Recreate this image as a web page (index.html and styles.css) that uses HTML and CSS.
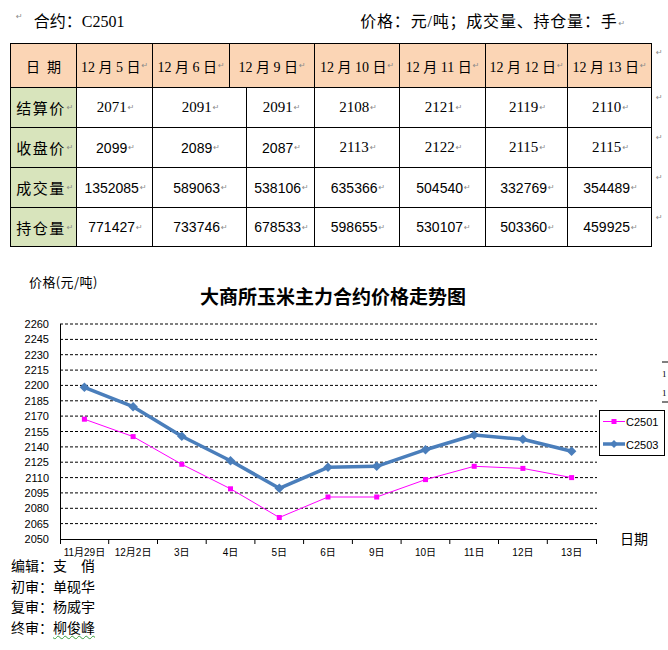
FILE: index.html
```html
<!DOCTYPE html>
<html lang="zh-CN">
<head>
<meta charset="utf-8">
<title>大商所玉米主力合约</title>
<link rel="stylesheet" href="styles.css">
</head>
<body>
<div class="topbar">
  <span class="ret ret-lead">↵</span>
  <span class="contract">合约：C2501</span>
  <span class="units">价格：元/吨；成交量、持仓量：手<span class="ret">↵</span></span>
</div>

<div class="tbl">
  <div class="row head">
    <div class="cell first"><span class="lbl-date">日期</span></div>
    <div class="cell">12 月 5 日<span class="ret">↵</span></div>
    <div class="cell">12 月 6 日<span class="ret">↵</span></div>
    <div class="cell">12 月 9 日<span class="ret">↵</span></div>
    <div class="cell">12 月 10 日<span class="ret">↵</span></div>
    <div class="cell">12 月 11 日<span class="ret">↵</span></div>
    <div class="cell">12 月 12 日<span class="ret">↵</span></div>
    <div class="cell">12 月 13 日<span class="ret">↵</span></div>
    <div class="mark">↵</div>
  </div>
  <div class="row body r1">
    <div class="cell first lbl">结算价<span class="ret">↵</span></div>
    <div class="cell num serif">2071<span class="ret">↵</span></div>
    <div class="cell num serif">2091<span class="ret">↵</span></div>
    <div class="cell num serif">2091<span class="ret">↵</span></div>
    <div class="cell num serif">2108<span class="ret">↵</span></div>
    <div class="cell num serif">2121<span class="ret">↵</span></div>
    <div class="cell num serif">2119<span class="ret">↵</span></div>
    <div class="cell num serif">2110<span class="ret">↵</span></div>
    <div class="mark">↵</div>
  </div>
  <div class="row body r2">
    <div class="cell first lbl">收盘价<span class="ret">↵</span></div>
    <div class="cell num">2099<span class="ret">↵</span></div>
    <div class="cell num">2089<span class="ret">↵</span></div>
    <div class="cell num">2087<span class="ret">↵</span></div>
    <div class="cell num serif">2113<span class="ret">↵</span></div>
    <div class="cell num serif">2122<span class="ret">↵</span></div>
    <div class="cell num serif">2115<span class="ret">↵</span></div>
    <div class="cell num serif">2115<span class="ret">↵</span></div>
    <div class="mark">↵</div>
  </div>
  <div class="row body r3">
    <div class="cell first lbl">成交量<span class="ret">↵</span></div>
    <div class="cell num">1352085<span class="ret">↵</span></div>
    <div class="cell num">589063<span class="ret">↵</span></div>
    <div class="cell num">538106<span class="ret">↵</span></div>
    <div class="cell num">635366<span class="ret">↵</span></div>
    <div class="cell num">504540<span class="ret">↵</span></div>
    <div class="cell num">332769<span class="ret">↵</span></div>
    <div class="cell num">354489<span class="ret">↵</span></div>
    <div class="mark">↵</div>
  </div>
  <div class="row body r4">
    <div class="cell first lbl">持仓量<span class="ret">↵</span></div>
    <div class="cell num">771427<span class="ret">↵</span></div>
    <div class="cell num">733746<span class="ret">↵</span></div>
    <div class="cell num">678533<span class="ret">↵</span></div>
    <div class="cell num">598655<span class="ret">↵</span></div>
    <div class="cell num">530107<span class="ret">↵</span></div>
    <div class="cell num">503360<span class="ret">↵</span></div>
    <div class="cell num">459925<span class="ret">↵</span></div>
    <div class="mark">↵</div>
  </div>
</div>

<svg class="chart" width="668" height="305" viewBox="0 250 668 305" xmlns="http://www.w3.org/2000/svg">
  <text class="ytitle" x="29" y="281">价格(元/吨)</text>
  <text class="ctitle" x="333" y="295">大商所玉米主力合约价格走势图</text>

  <g class="grid">
    <line x1="60" y1="324" x2="597" y2="324"/>
    <line x1="60" y1="339.4" x2="597" y2="339.4"/>
    <line x1="60" y1="354.7" x2="597" y2="354.7"/>
    <line x1="60" y1="370.1" x2="597" y2="370.1"/>
    <line x1="60" y1="385.4" x2="597" y2="385.4"/>
    <line x1="60" y1="400.8" x2="597" y2="400.8"/>
    <line x1="60" y1="416.1" x2="597" y2="416.1"/>
    <line x1="60" y1="431.5" x2="597" y2="431.5"/>
    <line x1="60" y1="446.9" x2="597" y2="446.9"/>
    <line x1="60" y1="462.2" x2="597" y2="462.2"/>
    <line x1="60" y1="477.6" x2="597" y2="477.6"/>
    <line x1="60" y1="492.9" x2="597" y2="492.9"/>
    <line x1="60" y1="508.3" x2="597" y2="508.3"/>
    <line x1="60" y1="523.6" x2="597" y2="523.6"/>
  </g>

  <g class="ylab">
    <text x="49" y="324">2260</text>
    <text x="49" y="339.4">2245</text>
    <text x="49" y="354.7">2230</text>
    <text x="49" y="370.1">2215</text>
    <text x="49" y="385.4">2200</text>
    <text x="49" y="400.8">2185</text>
    <text x="49" y="416.1">2170</text>
    <text x="49" y="431.5">2155</text>
    <text x="49" y="446.9">2140</text>
    <text x="49" y="462.2">2125</text>
    <text x="49" y="477.6">2110</text>
    <text x="49" y="492.9">2095</text>
    <text x="49" y="508.3">2080</text>
    <text x="49" y="523.6">2065</text>
    <text x="49" y="539">2050</text>
  </g>

  <g class="axis">
    <line x1="60.5" y1="324" x2="60.5" y2="539.5"/>
    <line x1="60" y1="539.5" x2="597" y2="539.5"/>
    <line x1="60.5" y1="539" x2="60.5" y2="544"/>
    <line x1="108.7" y1="539" x2="108.7" y2="544"/>
    <line x1="157.5" y1="539" x2="157.5" y2="544"/>
    <line x1="206.2" y1="539" x2="206.2" y2="544"/>
    <line x1="254.9" y1="539" x2="254.9" y2="544"/>
    <line x1="303.6" y1="539" x2="303.6" y2="544"/>
    <line x1="352.4" y1="539" x2="352.4" y2="544"/>
    <line x1="401.1" y1="539" x2="401.1" y2="544"/>
    <line x1="449.8" y1="539" x2="449.8" y2="544"/>
    <line x1="498.5" y1="539" x2="498.5" y2="544"/>
    <line x1="547.3" y1="539" x2="547.3" y2="544"/>
    <line x1="596.5" y1="539" x2="596.5" y2="544"/>
  </g>

  <g class="xlab">
    <text x="84.4" y="552">11月29日</text>
    <text x="133.1" y="552">12月2日</text>
    <text x="181.8" y="552">3日</text>
    <text x="230.5" y="552">4日</text>
    <text x="279.3" y="552">5日</text>
    <text x="328" y="552">6日</text>
    <text x="376.7" y="552">9日</text>
    <text x="425.5" y="552">10日</text>
    <text x="474.2" y="552">11日</text>
    <text x="522.9" y="552">12日</text>
    <text x="571.6" y="552">13日</text>
  </g>
  <text class="xtitle" x="620" y="538">日期</text>

  <polyline class="s1" points="84.4,419.2 133.1,436.6 181.8,464.3 230.5,488.8 279.3,517.5 328,497 376.7,497 425.5,479.6 474.2,466.3 522.9,468.4 571.6,477.6"/>
  <g class="m1">
    <rect x="81.9" y="416.7" width="5" height="5"/>
    <rect x="130.6" y="434.1" width="5" height="5"/>
    <rect x="179.3" y="461.8" width="5" height="5"/>
    <rect x="228" y="486.3" width="5" height="5"/>
    <rect x="276.8" y="515" width="5" height="5"/>
    <rect x="325.5" y="494.5" width="5" height="5"/>
    <rect x="374.2" y="494.5" width="5" height="5"/>
    <rect x="423" y="477.1" width="5" height="5"/>
    <rect x="471.7" y="463.8" width="5" height="5"/>
    <rect x="520.4" y="465.9" width="5" height="5"/>
    <rect x="569.1" y="475.1" width="5" height="5"/>
  </g>

  <polyline class="s2" points="84.4,387.3 133.1,406.7 181.8,436.3 230.5,460.7 279.3,488.3 328,467.3 376.7,466.3 425.5,449.7 474.2,435 522.9,439.3 571.6,451.3"/>
  <g class="m2">
    <path d="M84.4 382.5 L89.2 387.3 L84.4 392.1 L79.6 387.3 Z"/>
    <path d="M133.1 401.9 L137.9 406.7 L133.1 411.5 L128.3 406.7 Z"/>
    <path d="M181.8 431.5 L186.6 436.3 L181.8 441.1 L177 436.3 Z"/>
    <path d="M230.5 455.9 L235.3 460.7 L230.5 465.5 L225.7 460.7 Z"/>
    <path d="M279.3 483.5 L284.1 488.3 L279.3 493.1 L274.5 488.3 Z"/>
    <path d="M328 462.5 L332.8 467.3 L328 472.1 L323.2 467.3 Z"/>
    <path d="M376.7 461.5 L381.5 466.3 L376.7 471.1 L371.9 466.3 Z"/>
    <path d="M425.5 444.9 L430.3 449.7 L425.5 454.5 L420.7 449.7 Z"/>
    <path d="M474.2 430.2 L479 435 L474.2 439.8 L469.4 435 Z"/>
    <path d="M522.9 434.5 L527.7 439.3 L522.9 444.1 L518.1 439.3 Z"/>
    <path d="M571.6 446.5 L576.4 451.3 L571.6 456.1 L566.8 451.3 Z"/>
  </g>

  <rect class="legend" x="599.5" y="410.5" width="65" height="45"/>
  <line class="s1" x1="603" y1="421.5" x2="625" y2="421.5"/>
  <rect class="m1" x="611.5" y="419" width="5" height="5"/>
  <text class="legtext" x="626" y="422">C2501</text>
  <line class="s2" x1="603" y1="444" x2="625" y2="444"/>
  <path class="m2" d="M614 440 L618 444 L614 448 L610 444 Z"/>
  <text class="legtext" x="626" y="444.5">C2503</text>

  <g class="stray">
    <line x1="662" y1="362" x2="668" y2="362"/>
    <line x1="662" y1="402" x2="668" y2="402"/>
  </g>
  <text class="straytext" x="662" y="374">1</text>
  <text class="straytext" x="662" y="393">1</text>
</svg>

<div class="footer">
  <div class="fline">编辑：支　俏</div>
  <div class="fline">初审：单砚华</div>
  <div class="fline">复审：杨威宇</div>
  <div class="fline">终审：<span class="wavy">柳俊峰</span></div>
</div>
</body>
</html>
```

FILE: styles.css
```css
* { box-sizing: border-box; }

body {
  margin: 0;
  background: #ffffff;
  color: #000000;
  font-family: "Liberation Serif", "Noto Sans CJK SC", serif;
  width: 668px;
  height: 650px;
  overflow: hidden;
}

.ret {
  font-family: "DejaVu Sans", sans-serif;
  font-size: 8px;
  color: #8a8a8a;
  margin-left: 1px;
  vertical-align: 1px;
}

.topbar {
  height: 43px;
  display: flex;
  align-items: center;
  padding-left: 15px;
  padding-bottom: 4px;
  font-size: 16px;
}

.ret-lead {
  margin-right: 11px;
  vertical-align: 4px;
  align-self: flex-start;
  margin-top: 12px;
}

.units {
  margin-left: auto;
  margin-right: 42px;
  letter-spacing: 0.8px;
}

.tbl {
  margin-left: 10px;
}

.row {
  display: grid;
  grid-template-columns: 67px 76px 94px 68px 85px 86px 82px 84px 16px;
}

.row.head {
  grid-template-columns: 67px 76px 77px 85px 85px 86px 82px 84px 16px;
  height: 45px;
}

.row.r1, .row.r2, .row.r3 { height: 40px; }
.row.r4 { height: 39px; }

.cell {
  border-right: 1px solid #000;
  border-bottom: 1px solid #000;
  display: flex;
  align-items: center;
  justify-content: center;
  white-space: nowrap;
  background: #ffffff;
}

.head .cell {
  border-top: 1px solid #000;
  background: #fbd5b5;
  font-size: 14px;
}

.cell.first {
  border-left: 1px solid #000;
}

.body .cell.first {
  background: #d8e4bc;
}

.lbl-date {
  font-family: "Noto Sans CJK SC", sans-serif;
  font-size: 14px;
  letter-spacing: 7px;
  margin-right: -7px;
}

.lbl {
  font-family: "Noto Sans CJK SC", sans-serif;
  font-size: 15px;
  letter-spacing: 1.5px;
  justify-content: flex-end;
  padding-right: 1px;
}

.num {
  font-family: "Liberation Sans", sans-serif;
  font-size: 14px;
  padding-left: 2px;
}

.num.serif {
  font-family: "Liberation Serif", serif;
  font-size: 15px;
}

.mark {
  font-family: "DejaVu Sans", sans-serif;
  font-size: 8px;
  color: #8a8a8a;
  padding-left: 4px;
  padding-top: 5px;
}

.chart {
  display: block;
  margin-top: 3px;
  overflow: visible;
}

.ytitle {
  font-family: "Noto Sans CJK SC", sans-serif;
  font-size: 13px;
  letter-spacing: 0.4px;
  dominant-baseline: central;
}

.ctitle {
  font-family: "Noto Sans CJK SC", sans-serif;
  font-weight: bold;
  font-size: 19px;
  text-anchor: middle;
  dominant-baseline: central;
}

.grid line {
  stroke: #000;
  stroke-width: 1;
  stroke-dasharray: 3 2;
}

.axis line {
  stroke: #000;
  stroke-width: 1;
}

.ylab text {
  font-family: "Liberation Sans", sans-serif;
  font-size: 11px;
  text-anchor: end;
  dominant-baseline: central;
}

.xlab text {
  font-family: "Liberation Sans", "Noto Sans CJK SC", sans-serif;
  font-size: 10px;
  text-anchor: middle;
  dominant-baseline: central;
}

.xtitle {
  font-family: "Noto Sans CJK SC", sans-serif;
  font-size: 14px;
  dominant-baseline: central;
}

.s1 {
  fill: none;
  stroke: #ff00ff;
  stroke-width: 1;
}

.m1, .m1 rect {
  fill: #ff00ff;
}

.s2 {
  fill: none;
  stroke: #4a7ebb;
  stroke-width: 3.5;
  stroke-linejoin: round;
}

.m2, .m2 path {
  fill: #4a7ebb;
}

.legend {
  fill: #ffffff;
  stroke: #000;
  stroke-width: 1;
}

.legtext {
  font-family: "Liberation Sans", sans-serif;
  font-size: 11px;
  dominant-baseline: central;
}

.stray line {
  stroke: #000;
  stroke-width: 1;
}

.straytext {
  font-family: "Liberation Serif", serif;
  font-size: 9px;
  dominant-baseline: central;
}

.footer {
  padding-left: 11px;
  padding-top: 4px;
  font-family: "Liberation Sans", "Noto Sans CJK SC", sans-serif;
  font-size: 14px;
}

.fline {
  height: 14px;
  line-height: 14px;
  margin-bottom: 6.5px;
}

.wavy {
  text-decoration: underline wavy #3aa040;
  text-decoration-thickness: 1px;
  text-underline-offset: 2px;
}
```
